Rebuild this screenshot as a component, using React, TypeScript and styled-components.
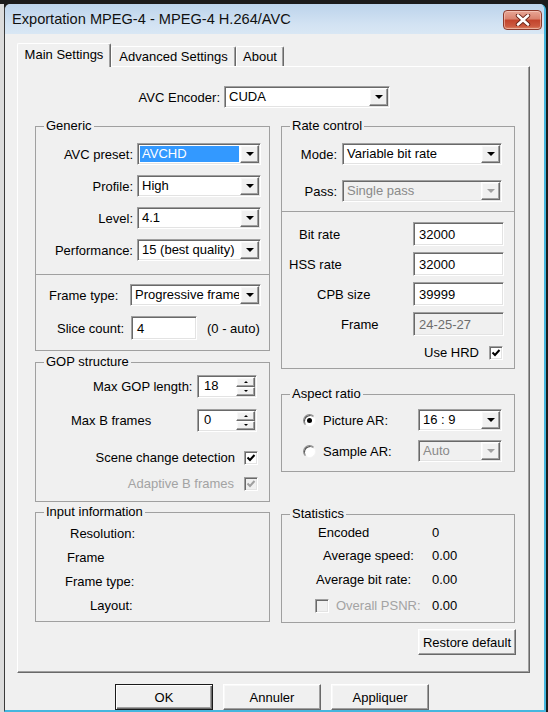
import * as React from "react";
import styled, { createGlobalStyle, css } from "styled-components";

const GlobalStyle = createGlobalStyle`
  html, body {
    margin: 0;
    padding: 0;
    background: #1c1c1c;
  }
  body {
    font-family: "Liberation Sans", Arial, sans-serif;
    font-size: 13px;
    color: #000;
  }
  * {
    box-sizing: border-box;
  }
`;

// classic win32 3d edges
const sunken = css`
  border: 1px solid;
  border-color: #a0a0a0 #ffffff #ffffff #a0a0a0;
  box-shadow: inset 1px 1px 0 #696969, inset -1px -1px 0 #e3e3e3;
`;

const raised = css`
  border: 1px solid;
  border-color: #ffffff #696969 #696969 #ffffff;
  box-shadow: inset -1px -1px 0 #a0a0a0, inset 1px 1px 0 #f8f8f8;
  background: #f0f0f0;
`;

const Screen = styled.div`
  width: 548px;
  height: 712px;
  overflow: hidden;
  display: flex;
  flex-direction: column;
  background: #1c1c1c;
`;

const TopStrip = styled.div`
  flex: none;
  height: 4px;
  background: #1b1b1b;
`;

const Desk = styled.div`
  flex: 1;
  display: flex;
  min-height: 0;
`;

const BehindStrip = styled.div`
  flex: none;
  width: 4px;
  background: #dcdcdc;
`;

const Window = styled.div`
  flex: none;
  width: 542px;
  height: 708px;
  display: flex;
  flex-direction: column;
  background: #f0f0f0;
  border-left: 1px solid #3a3a3a;
  border-right: 2px solid #45b6de;
  border-bottom: 2px solid #45b6de;
  border-radius: 6px 6px 0 0;
  overflow: hidden;
`;

const TitleBar = styled.div`
  flex: none;
  height: 30px;
  display: flex;
  align-items: center;
  justify-content: space-between;
  padding: 0 2px 0 7px;
  background: linear-gradient(#bcd3eb, #d3e3f3 70%, #d9e7f4);
`;

const TitleText = styled.span`
  font-size: 14.6px;
  color: #111;
  white-space: nowrap;
`;

const CloseButton = styled.div`
  width: 39px;
  height: 20px;
  margin-top: 1px;
  display: flex;
  align-items: center;
  justify-content: center;
  border: 1px solid #8b3a2c;
  border-radius: 4px;
  background: linear-gradient(#e8a696 0%, #d9826e 45%, #c2432b 50%, #cc5a40 85%, #dc8a6a 100%);
  box-shadow: inset 0 0 0 1px rgba(255, 220, 210, 0.5);
`;

const Body = styled.div`
  flex: 1;
  display: flex;
  flex-direction: column;
  padding: 9px 14px 0 12px;
`;

const TabStrip = styled.div`
  height: 23px;
  display: flex;
  align-items: flex-end;
  position: relative;
  z-index: 1;
`;

const Tab = styled.div<{ $active?: boolean; $w: number }>`
  width: ${p => p.$w}px;
  height: ${p => (p.$active ? 24 : 20)}px;
  margin-bottom: ${p => (p.$active ? -1 : 0)}px;
  padding-top: ${p => (p.$active ? 3 : 2)}px;
  line-height: 16px;
  text-align: center;
  white-space: nowrap;
  background: #f0f0f0;
  border-top: 1px solid #ffffff;
  border-left: 1px solid #ffffff;
  border-right: 1px solid #696969;
  box-shadow: inset -1px 0 0 #a0a0a0;
  border-radius: 2px 2px 0 0;
`;

const Panel = styled.div`
  width: 513px;
  height: 607px;
  display: flex;
  flex-direction: column;
  border-top: 1px solid #ffffff;
  border-left: 1px solid #ffffff;
  border-right: 1px solid #696969;
  border-bottom: 1px solid #696969;
  box-shadow: inset -1px -1px 0 #a0a0a0;
`;

const EncoderRow = styled.div`
  margin-top: 19px;
  height: 22px;
  display: flex;
  align-items: center;
`;

const EncoderLabel = styled.span`
  width: 202px;
  text-align: right;
`;

const Columns = styled.div`
  margin-top: 10px;
  padding-left: 17px;
  display: grid;
  grid-template-columns: 235px 234px;
  column-gap: 11px;
`;

const Column = styled.div`
  display: flex;
  flex-direction: column;
`;

const Group = styled.fieldset<{ $mt?: number; $pb: number }>`
  margin: ${p => p.$mt || 0}px 0 0 0;
  padding: 0 0 ${p => p.$pb}px 0;
  min-width: 0;
  border: 1px solid #a0a0a0;
`;

const Legend = styled.legend`
  margin-left: 8px;
  padding: 0 2px;
  line-height: 16px;
  font-size: 13px;
`;

const Divider = styled.div<{ $mt: number }>`
  margin-top: ${p => p.$mt}px;
  border-top: 1px solid #a0a0a0;
`;

const Row = styled.div<{ $mt: number; $h?: number; $end?: boolean; $pr?: number }>`
  margin-top: ${p => p.$mt}px;
  height: ${p => p.$h || 22}px;
  padding-right: ${p => p.$pr || 0}px;
  display: flex;
  align-items: center;
  justify-content: ${p => (p.$end ? "flex-end" : "flex-start")};
`;

const Label = styled.span<{ $w?: number; $right?: boolean; $ml?: number; $off?: boolean }>`
  flex: none;
  white-space: nowrap;
  width: ${p => (p.$w ? `${p.$w}px` : "auto")};
  margin-left: ${p => p.$ml || 0}px;
  text-align: ${p => (p.$right ? "right" : "left")};
  color: ${p => (p.$off ? "#a3a3a3" : "#000")};
`;

const Hint = styled.span`
  margin-left: 10px;
  white-space: nowrap;
`;

const ComboBox = styled.div<{ $w: number; $ml?: number | "auto"; $mr?: number; $off?: boolean }>`
  ${sunken};
  flex: none;
  width: ${p => p.$w}px;
  height: 22px;
  margin-left: ${p => (p.$ml === "auto" ? "auto" : `${p.$ml || 0}px`)};
  margin-right: ${p => p.$mr || 0}px;
  padding: 1px;
  display: flex;
  background: ${p => (p.$off ? "#f0f0f0" : "#ffffff")};
`;

const ComboText = styled.span<{ $selected?: boolean; $off?: boolean }>`
  flex: 1;
  margin: 1px;
  padding-left: 2px;
  line-height: 16px;
  white-space: nowrap;
  overflow: hidden;
  background: ${p => (p.$selected ? "#3399ff" : "transparent")};
  color: ${p => (p.$selected ? "#fff" : p.$off ? "#8a8a8a" : "#000")};
`;

const ComboArrow = styled.span<{ $off?: boolean }>`
  ${raised};
  flex: none;
  width: 19px;
  display: flex;
  align-items: center;
  justify-content: center;
  &::after {
    content: "";
    border-left: 4px solid transparent;
    border-right: 4px solid transparent;
    border-top: 4px solid ${p => (p.$off ? "#a0a0a0" : "#000")};
  }
`;

const Edit = styled.div<{ $w: number; $ml?: number | "auto"; $mr?: number; $off?: boolean }>`
  ${sunken};
  flex: none;
  width: ${p => p.$w}px;
  height: 24px;
  margin-left: ${p => (p.$ml === "auto" ? "auto" : `${p.$ml || 0}px`)};
  margin-right: ${p => p.$mr || 0}px;
  padding: 0 0 0 5px;
  display: flex;
  align-items: center;
  background: ${p => (p.$off ? "#f0f0f0" : "#ffffff")};
  color: ${p => (p.$off ? "#6d6d6d" : "#000")};
`;

const SpinBox = styled.div<{ $mr: number }>`
  ${sunken};
  flex: none;
  width: 60px;
  height: 23px;
  margin-left: auto;
  margin-right: ${p => p.$mr}px;
  padding: 1px;
  display: flex;
  background: #fff;
`;

const SpinValue = styled.span`
  flex: 1;
  padding-left: 5px;
  line-height: 17px;
`;

const SpinButtons = styled.span`
  flex: none;
  width: 19px;
  display: flex;
  flex-direction: column;
`;

const SpinHalf = styled.span<{ $up?: boolean }>`
  ${raised};
  flex: 1;
  display: flex;
  align-items: center;
  justify-content: center;
  &::after {
    content: "";
    border-left: 2px solid transparent;
    border-right: 2px solid transparent;
    ${p => (p.$up ? "border-bottom: 2px solid #000;" : "border-top: 2px solid #000;")}
  }
`;

const CheckBox = styled.span<{ $off?: boolean; $ml?: number }>`
  ${sunken};
  flex: none;
  width: 14px;
  height: 14px;
  margin-left: ${p => p.$ml || 0}px;
  display: flex;
  align-items: center;
  justify-content: center;
  background: ${p => (p.$off ? "#f0f0f0" : "#ffffff")};
`;

const Radio = styled.span<{ $on?: boolean }>`
  flex: none;
  width: 13px;
  height: 13px;
  margin-left: 21px;
  border-radius: 50%;
  border: 1px solid;
  border-color: #8a8a8a #f4f4f4 #f4f4f4 #8a8a8a;
  box-shadow: inset 1px 1px 0 #555;
  background: #fff;
  display: flex;
  align-items: center;
  justify-content: center;
  &::after {
    content: "";
    width: 5px;
    height: 5px;
    border-radius: 50%;
    background: ${p => (p.$on ? "#000" : "transparent")};
  }
`;

const InfoRow = styled.div<{ $ml: number }>`
  height: 24px;
  line-height: 24px;
  padding-left: ${p => p.$ml}px;
  white-space: nowrap;
`;

const InfoList = styled.div`
  padding-top: 2px;
`;

const StatsGrid = styled.div`
  display: grid;
  grid-template-columns: 150px 1fr;
  grid-template-rows: 21px 24px 24px 29px;
  align-items: center;
`;

const StatLabel = styled.span<{ $ml: number; $off?: boolean }>`
  display: flex;
  align-items: center;
  gap: 7px;
  padding-left: ${p => p.$ml}px;
  white-space: nowrap;
  color: ${p => (p.$off ? "#a3a3a3" : "#000")};
`;

const PushButton = styled.div<{ $w: number; $default?: boolean }>`
  ${raised};
  flex: none;
  width: ${p => p.$w}px;
  height: 26px;
  display: flex;
  align-items: center;
  justify-content: center;
  white-space: nowrap;
  ${p =>
    p.$default &&
    css`
      border-color: #1a1a1a;
      box-shadow: inset 1px 1px 0 #ffffff, inset -1px -1px 0 #696969, inset -2px -2px 0 #a0a0a0;
    `}
`;

const RestoreButton = styled(PushButton)`
  align-self: flex-end;
  margin-top: 6px;
  margin-right: -1px;
`;

const DialogButtons = styled.div`
  margin-top: 11px;
  padding-left: 98px;
  display: flex;
  gap: 10px;
`;

const Tick = ({ off }: { off?: boolean }) => (
  <svg width="10" height="10" viewBox="0 0 10 10">
    <path d="M1.5 4.5 L4 7 L8.5 2" fill="none" stroke={off ? "#a0a0a0" : "#000"} strokeWidth="2" />
  </svg>
);

interface ComboProps {
  w: number;
  value: string;
  ml?: number | "auto";
  mr?: number;
  selected?: boolean;
  off?: boolean;
}

const Combo = (props: ComboProps) => (
  <ComboBox $w={props.w} $ml={props.ml} $mr={props.mr} $off={props.off}>
    <ComboText $selected={props.selected} $off={props.off}>
      {props.value}
    </ComboText>
    <ComboArrow $off={props.off} />
  </ComboBox>
);

const Spin = ({ value }: { value: string }) => (
  <SpinBox $mr={12}>
    <SpinValue>{value}</SpinValue>
    <SpinButtons>
      <SpinHalf $up />
      <SpinHalf />
    </SpinButtons>
  </SpinBox>
);

export default function App() {
  return (
    <>
      <GlobalStyle />
      <Screen>
        <TopStrip />
        <Desk>
          <BehindStrip />
          <Window>
            <TitleBar>
              <TitleText>Exportation MPEG-4 - MPEG-4 H.264/AVC</TitleText>
              <CloseButton>
                <svg width="16" height="12" viewBox="0 0 16 12">
                  <path d="M3 1.5 L13 10.5 M13 1.5 L3 10.5" stroke="#6a2418" strokeWidth="4.4" strokeLinecap="round" />
                  <path d="M3 1.5 L13 10.5 M13 1.5 L3 10.5" stroke="#ffffff" strokeWidth="2.6" strokeLinecap="round" />
                </svg>
              </CloseButton>
            </TitleBar>
            <Body>
              <TabStrip>
                <Tab $active $w={94}>Main Settings</Tab>
                <Tab $w={125}>Advanced Settings</Tab>
                <Tab $w={48}>About</Tab>
              </TabStrip>
              <Panel>
                <EncoderRow>
                  <EncoderLabel>AVC Encoder:</EncoderLabel>
                  <Combo w={166} ml={4} value="CUDA" />
                </EncoderRow>
                <Columns>
                  <Column>
                    <Group $pb={10}>
                      <Legend>Generic</Legend>
                      <Row $mt={9}>
                        <Label $w={97} $right>AVC preset:</Label>
                        <Combo w={124} ml={4} value="AVCHD" selected />
                      </Row>
                      <Row $mt={10}>
                        <Label $w={97} $right>Profile:</Label>
                        <Combo w={124} ml={4} value="High" />
                      </Row>
                      <Row $mt={10}>
                        <Label $w={97} $right>Level:</Label>
                        <Combo w={124} ml={4} value="4.1" />
                      </Row>
                      <Row $mt={10}>
                        <Label $w={97} $right>Performance:</Label>
                        <Combo w={124} ml={4} value="15 (best quality)" />
                      </Row>
                      <Divider $mt={13} />
                      <Row $mt={9}>
                        <Label $w={81} $ml={13}>Frame type:</Label>
                        <Combo w={131} value="Progressive frame" />
                      </Row>
                      <Row $mt={10} $h={24}>
                        <Label $w={74} $ml={21}>Slice count:</Label>
                        <Edit $w={66}>4</Edit>
                        <Hint>(0 - auto)</Hint>
                      </Row>
                    </Group>

                    <Group $mt={3} $pb={10}>
                      <Legend>GOP structure</Legend>
                      <Row $mt={5} $h={23}>
                        <Label $ml={57}>Max GOP length:</Label>
                        <Spin value="18" />
                      </Row>
                      <Row $mt={11} $h={23}>
                        <Label $ml={35}>Max B frames</Label>
                        <Spin value="0" />
                      </Row>
                      <Row $mt={18} $h={15} $end $pr={11}>
                        <Label>Scene change detection</Label>
                        <CheckBox $ml={9}>
                          <Tick />
                        </CheckBox>
                      </Row>
                      <Row $mt={11} $h={15} $end $pr={11}>
                        <Label $off>Adaptive B frames</Label>
                        <CheckBox $ml={10} $off>
                          <Tick off />
                        </CheckBox>
                      </Row>
                    </Group>

                    <Group $mt={2} $pb={3}>
                      <Legend>Input information</Legend>
                      <InfoList>
                        <InfoRow $ml={34}>Resolution:</InfoRow>
                        <InfoRow $ml={31}>Frame</InfoRow>
                        <InfoRow $ml={29}>Frame type:</InfoRow>
                        <InfoRow $ml={54}>Layout:</InfoRow>
                      </InfoList>
                    </Group>
                  </Column>

                  <Column>
                    <Group $pb={8}>
                      <Legend>Rate control</Legend>
                      <Row $mt={9}>
                        <Label $w={55} $right>Mode:</Label>
                        <Combo w={160} ml={5} value="Variable bit rate" />
                      </Row>
                      <Row $mt={15}>
                        <Label $w={55} $right>Pass:</Label>
                        <Combo w={160} ml={5} value="Single pass" off />
                      </Row>
                      <Divider $mt={9} />
                      <Row $mt={10} $h={24}>
                        <Label $ml={17}>Bit rate</Label>
                        <Edit $w={91} $ml="auto" $mr={10}>32000</Edit>
                      </Row>
                      <Row $mt={6} $h={24}>
                        <Label $ml={7}>HSS rate</Label>
                        <Edit $w={91} $ml="auto" $mr={10}>32000</Edit>
                      </Row>
                      <Row $mt={6} $h={24}>
                        <Label $ml={35}>CPB size</Label>
                        <Edit $w={91} $ml="auto" $mr={10}>39999</Edit>
                      </Row>
                      <Row $mt={6} $h={24}>
                        <Label $ml={59}>Frame</Label>
                        <Edit $w={91} $ml="auto" $mr={10} $off>24-25-27</Edit>
                      </Row>
                      <Row $mt={9} $h={15} $end $pr={11}>
                        <Label>Use HRD</Label>
                        <CheckBox $ml={10}>
                          <Tick />
                        </CheckBox>
                      </Row>
                    </Group>

                    <Group $mt={17} $pb={9}>
                      <Legend>Aspect ratio</Legend>
                      <Row $mt={7}>
                        <Radio $on />
                        <Label $ml={7}>Picture AR:</Label>
                        <Combo w={84} ml="auto" mr={12} value="16 : 9" />
                      </Row>
                      <Row $mt={9}>
                        <Radio />
                        <Label $ml={7}>Sample AR:</Label>
                        <Combo w={84} ml="auto" mr={12} value="Auto" off />
                      </Row>
                    </Group>

                    <Group $mt={34} $pb={2}>
                      <Legend>Statistics</Legend>
                      <StatsGrid>
                        <StatLabel $ml={36}>Encoded</StatLabel>
                        <span>0</span>
                        <StatLabel $ml={41}>Average speed:</StatLabel>
                        <span>0.00</span>
                        <StatLabel $ml={34}>Average bit rate:</StatLabel>
                        <span>0.00</span>
                        <StatLabel $ml={33} $off>
                          <CheckBox $off />
                          Overall PSNR:
                        </StatLabel>
                        <span>0.00</span>
                      </StatsGrid>
                    </Group>

                    <RestoreButton $w={98}>Restore default</RestoreButton>
                  </Column>
                </Columns>
              </Panel>
              <DialogButtons>
                <PushButton $w={98} $default>OK</PushButton>
                <PushButton $w={98}>Annuler</PushButton>
                <PushButton $w={98}>Appliquer</PushButton>
              </DialogButtons>
            </Body>
          </Window>
        </Desk>
      </Screen>
    </>
  );
}
